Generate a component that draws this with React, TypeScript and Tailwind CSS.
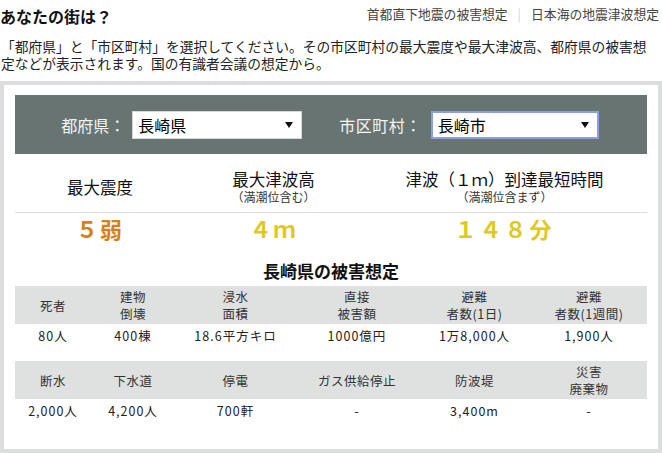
import React from "react";

const font = { fontFamily: '"Noto Sans CJK JP", "Liberation Sans", sans-serif' };

function Caret() {
  return (
    <svg width="8" height="6" viewBox="0 0 8 6" className="shrink-0">
      <path d="M0 0 L8 0 L4 6 Z" fill="#111" />
    </svg>
  );
}

function FakeSelect({ value, focused, w }: { value: string; focused?: boolean; w: string }) {
  return (
    <div
      className={
        "h-[28px] bg-white flex items-center justify-between pl-[5px] pr-[8px] " +
        w +
        (focused ? " border-2 border-[#8d9ee3]" : " border border-[#d8d8d8]")
      }
    >
      <span className="text-[16px] leading-[20px] text-black">{value}</span>
      <Caret />
    </div>
  );
}

const cols = "grid grid-cols-[76px_84px_121px_122px_113px_116px]";

function DamageTable({ heads, vals }: { heads: string[][]; vals: string[] }) {
  return (
    <div>
      <div className={cols + " bg-[#dfe1e0] h-[38px] items-center"}>
        {heads.map((h, i) => (
          <div key={i} className="text-center text-[12.5px] leading-[17px] text-[#333] tracking-[0.5px]">
            {h.map((l, j) => (
              <div key={j}>{l}</div>
            ))}
          </div>
        ))}
      </div>
      <div className={cols + " h-[22px] items-center"}>
        {vals.map((v, i) => (
          <div key={i} className="text-center text-[12.5px] leading-[17px] text-[#222] tracking-[1px]">
            {v}
          </div>
        ))}
      </div>
    </div>
  );
}

export default function App() {
  return (
    <div className="w-[662px] h-[453px] bg-white overflow-hidden text-[#222]" style={font}>
      <div className="flex justify-between items-start h-[30px]">
        <h1 className="text-[16px] font-bold leading-[24px] pt-[4px] text-[#111]">あなたの街は？</h1>
        <div className="flex items-center text-[12.8px] leading-[20px] pt-[4px] pr-[3px] text-[#444]">
          <span>首都直下地震の被害想定</span>
          <span className="mx-[10px] text-[#d4d4d4]">|</span>
          <span>日本海の地震津波想定</span>
        </div>
      </div>
      <p className="mt-[8px] pl-[1px] text-[13.75px] leading-[17px] text-[#222] whitespace-nowrap">
        「都府県」と「市区町村」を選択してください。その市区町村の最大震度や最大津波高、都府県の被害想
        <br />
        定などが表示されます。国の有識者会議の想定から。
      </p>
      <div className="mt-[9px] border-4 border-[#dcdedd] px-[11px] pt-[10px] h-[372px]">
        <div className="bg-[#687472] h-[59px] flex items-center justify-center gap-[37px] pr-[2px]">
          <div className="flex items-center gap-[7px]">
            <span className="text-[16px] text-[#f4f4f4]">都府県：</span>
            <FakeSelect value="長崎県" w="w-[170px]" />
          </div>
          <div className="flex items-center gap-[9px]">
            <span className="text-[16px] text-[#f4f4f4] tracking-[0.5px]">市区町村：</span>
            <FakeSelect value="長崎市" focused w="w-[168px]" />
          </div>
        </div>
        <div className="grid grid-cols-[170px_177px_285px] h-[59px] pt-[8px] items-center border-b border-[#dcdedd]">
          <div className="text-center text-[16.5px] leading-[18px] text-[#111]">最大震度</div>
          <div className="text-center">
            <div className="text-[16.5px] leading-[18px] text-[#111]">最大津波高</div>
            <div className="text-[12px] leading-[17px] text-[#333]">（満潮位含む）</div>
          </div>
          <div className="text-center">
            <div className="text-[16.5px] leading-[18px] text-[#111]">津波（１ｍ）到達最短時間</div>
            <div className="text-[12px] leading-[17px] text-[#333]">（満潮位含まず）</div>
          </div>
        </div>
        <div className="grid grid-cols-[170px_177px_285px] h-[29px] items-center">
          <div className="text-center text-[22px] leading-[28px] font-bold tracking-[2px] text-[#d4801c]">５弱</div>
          <div className="text-center text-[22px] leading-[28px] font-bold tracking-[2px] text-[#e0c81e]">４ｍ</div>
          <div className="text-center text-[22px] leading-[28px] font-bold tracking-[3px] text-[#e0c81e]">１４８分</div>
        </div>
        <h2 className="mt-[17px] text-center text-[17px] leading-[24px] font-bold text-[#111]">長崎県の被害想定</h2>
        <div className="mt-[3px]">
          <DamageTable
            heads={[["死者"], ["建物", "倒壊"], ["浸水", "面積"], ["直接", "被害額"], ["避難", "者数(1日)"], ["避難", "者数(1週間)"]]}
            vals={["80人", "400棟", "18.6平方キロ", "1000億円", "1万8,000人", "1,900人"]}
          />
        </div>
        <div className="mt-[15px]">
          <DamageTable
            heads={[["断水"], ["下水道"], ["停電"], ["ガス供給停止"], ["防波堤"], ["災害", "廃棄物"]]}
            vals={["2,000人", "4,200人", "700軒", "-", "3,400m", "-"]}
          />
        </div>
      </div>
    </div>
  );
}
